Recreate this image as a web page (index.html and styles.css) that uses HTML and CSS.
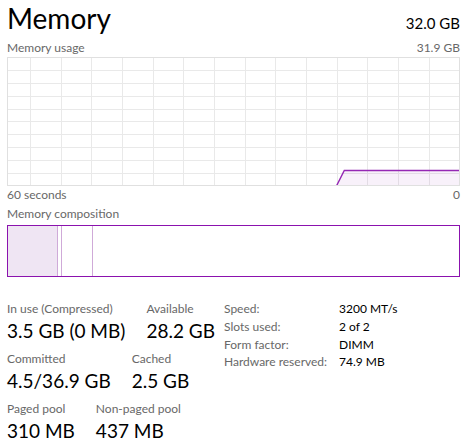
FILE: index.html
```html
<!DOCTYPE html>
<html>
<head>
<meta charset="utf-8">
<link rel="stylesheet" href="styles.css">
</head>
<body>
<div class="page">
  <div class="header">
    <div class="title">Memory</div>
    <div class="total">32.0 GB</div>
  </div>
  <div class="row-labels first">
    <span>Memory usage</span>
    <span>31.9 GB</span>
  </div>
  <div class="graph">
    <svg width="451" height="127" viewBox="0 0 451 127" class="graph-svg">
      <g stroke="#e9e9e9" stroke-width="1">
        <line x1="22.5" y1="0" x2="22.5" y2="127"/>
        <line x1="53.5" y1="0" x2="53.5" y2="127"/>
        <line x1="83.5" y1="0" x2="83.5" y2="127"/>
        <line x1="114.5" y1="0" x2="114.5" y2="127"/>
        <line x1="145.5" y1="0" x2="145.5" y2="127"/>
        <line x1="175.5" y1="0" x2="175.5" y2="127"/>
        <line x1="206.5" y1="0" x2="206.5" y2="127"/>
        <line x1="237.5" y1="0" x2="237.5" y2="127"/>
        <line x1="267.5" y1="0" x2="267.5" y2="127"/>
        <line x1="298.5" y1="0" x2="298.5" y2="127"/>
        <line x1="329.5" y1="0" x2="329.5" y2="127"/>
        <line x1="359.5" y1="0" x2="359.5" y2="127"/>
        <line x1="390.5" y1="0" x2="390.5" y2="127"/>
        <line x1="421.5" y1="0" x2="421.5" y2="127"/>
        <line x1="0" y1="12.5" x2="451" y2="12.5"/>
        <line x1="0" y1="25.5" x2="451" y2="25.5"/>
        <line x1="0" y1="38.5" x2="451" y2="38.5"/>
        <line x1="0" y1="51.5" x2="451" y2="51.5"/>
        <line x1="0" y1="63.5" x2="451" y2="63.5"/>
        <line x1="0" y1="76.5" x2="451" y2="76.5"/>
        <line x1="0" y1="89.5" x2="451" y2="89.5"/>
        <line x1="0" y1="102.5" x2="451" y2="102.5"/>
        <line x1="0" y1="115.5" x2="451" y2="115.5"/>
      </g>
      <polygon points="328.7,127 336.3,112.5 451,112.5 451,127" fill="rgba(139,18,174,0.06)"/>
      <polyline points="328.7,127.5 336.3,112.5 451,112.5" fill="none" stroke="#9528b4" stroke-width="1.4"/>
    </svg>
  </div>
  <div class="row-labels axis">
    <span>60 seconds</span>
    <span>0</span>
  </div>
  <div class="row-labels comp-label">
    <span>Memory composition</span>
  </div>
  <div class="composition">
    <div class="seg seg-inuse"></div>
    <div class="seg seg-modified"></div>
    <div class="seg seg-standby"></div>
  </div>
  <div class="stats">
    <div class="stats-left">
      <div class="stat-row">
        <div class="stat">
          <div class="stat-label">In use (Compressed)</div>
          <div class="stat-value">3.5 GB (0 MB)</div>
        </div>
        <div class="stat">
          <div class="stat-label">Available</div>
          <div class="stat-value">28.2 GB</div>
        </div>
      </div>
      <div class="stat-row">
        <div class="stat">
          <div class="stat-label">Committed</div>
          <div class="stat-value">4.5/36.9 GB</div>
        </div>
        <div class="stat">
          <div class="stat-label">Cached</div>
          <div class="stat-value">2.5 GB</div>
        </div>
      </div>
      <div class="stat-row">
        <div class="stat">
          <div class="stat-label">Paged pool</div>
          <div class="stat-value">310 MB</div>
        </div>
        <div class="stat">
          <div class="stat-label">Non-paged pool</div>
          <div class="stat-value">437 MB</div>
        </div>
      </div>
    </div>
    <div class="stats-right">
      <div class="kv"><span class="k">Speed:</span><span class="v">3200 MT/s</span></div>
      <div class="kv"><span class="k">Slots used:</span><span class="v">2 of 2</span></div>
      <div class="kv"><span class="k">Form factor:</span><span class="v">DIMM</span></div>
      <div class="kv"><span class="k">Hardware reserved:</span><span class="v">74.9 MB</span></div>
    </div>
  </div>
</div>
</body>
</html>
```

FILE: styles.css
```css
html, body {
  margin: 0;
  padding: 0;
  background: #ffffff;
}
body {
  font-family: Lato, "Liberation Sans", sans-serif;
  color: #000;
}
.page {
  width: 453px;
  padding: 0 13px 0 7px;
}
.header {
  display: flex;
  justify-content: space-between;
  align-items: baseline;
  height: 36px;
}
.title {
  font-size: 28px;
  line-height: 36px;
  font-weight: 400;
}
.total {
  font-size: 15px;
  line-height: 36px;
}
.row-labels {
  display: flex;
  justify-content: space-between;
  font-size: 12px;
  line-height: 16px;
  color: #686868;
  height: 16px;
}
.row-labels.first {
  margin-top: 4px;
}
.row-labels.axis {
  margin-top: 1px;
}
.comp-label {
  margin-top: 3px;
}
.graph {
  margin-top: 1px;
  width: 453px;
  height: 129px;
  box-sizing: border-box;
  border: 1px solid #e0e0e0;
}
.graph-svg {
  display: block;
}
.composition {
  margin-top: 3px;
  width: 453px;
  height: 52px;
  box-sizing: border-box;
  border: 1px solid #8b12ae;
  display: flex;
}
.seg {
  height: 100%;
  border-right: 1px solid #cfaad8;
}
.seg-inuse {
  width: 49px;
  background: #efe5f3;
}
.seg-modified {
  width: 3px;
}
.seg-standby {
  width: 30px;
}
.stats {
  margin-top: 24px;
  display: flex;
}
.stats-left {
  width: 217px;
}
.stat-row {
  display: flex;
  gap: 21px;
  margin-bottom: 8px;
}
.stat-label {
  font-size: 12px;
  line-height: 16px;
  color: #686868;
}
.stat-value {
  margin-top: 2px;
  font-size: 19px;
  line-height: 24px;
}
.stats-right {
  margin-top: -1px;
}
.kv {
  display: flex;
  font-size: 12px;
  line-height: 17.8px;
}
.k {
  width: 115px;
  color: #686868;
}
.v {
  color: #000;
}
```
